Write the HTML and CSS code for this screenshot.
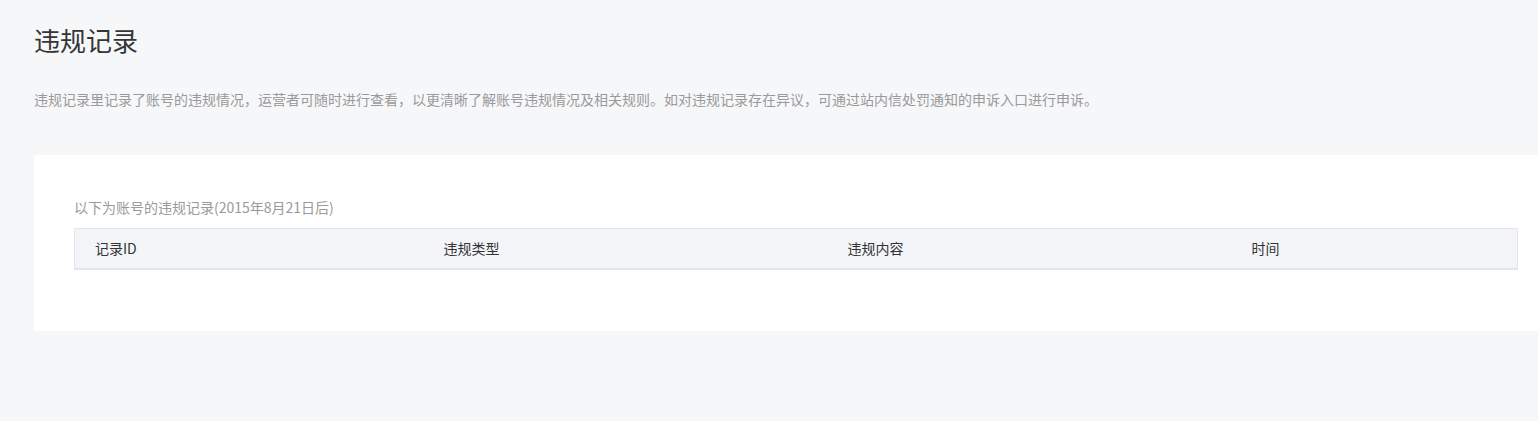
FILE: index.html
```html
<!DOCTYPE html>
<html lang="zh-CN">
<head>
    <meta charset="UTF-8">
    <title>违规记录</title>
    <link rel="stylesheet" href="styles.css">
</head>
<body>
    <div class="page">
        <h1 class="page-title">违规记录</h1>
        <p class="page-desc">违规记录里记录了账号的违规情况，运营者可随时进行查看，以更清晰了解账号违规情况及相关规则。如对违规记录存在异议，可通过站内信处罚通知的申诉入口进行申诉。</p>

        <div class="panel">
            <div class="panel-caption">以下为账号的违规记录(2015年8月21日后)</div>
            <table class="record-table">
                <thead>
                    <tr>
                        <th class="col-id">记录ID</th>
                        <th class="col-type">违规类型</th>
                        <th class="col-content">违规内容</th>
                        <th class="col-time">时间</th>
                    </tr>
                </thead>
                <tbody></tbody>
            </table>
        </div>
    </div>
</body>
</html>
```

FILE: styles.css
```css
:root {
    --bg: #f6f7f9;
    --text: #333;
    --muted: #9a9a9a;
    --th-bg: #f4f5f9;
    --th-border: #e4e5ea;
}

body {
    margin: 0;
    min-height: 100vh;
    background: var(--bg);
    font-family: "Noto Sans CJK SC", "Noto Sans", sans-serif;
    color: var(--text);
}

.page {
    padding: 23px 0 0 34px;
}

.page-title {
    margin: 0;
    font-size: 26px;
    font-weight: normal;
    line-height: 34px;
    color: #353535;
}

.page-desc {
    margin: 32px 0 0;
    font-size: 14px;
    line-height: 20px;
    color: var(--muted);
}

.panel {
    margin-top: 46px;
    background: #fff;
    padding: 42px 20px 61px 40px;
}

.panel-caption {
    font-size: 14px;
    line-height: 20px;
    color: var(--muted);
    margin-bottom: 11px;
}

.record-table {
    width: 100%;
    border-collapse: collapse;
    table-layout: fixed;
}

.record-table th {
    box-sizing: border-box;
    background: var(--th-bg);
    border-top: 1px solid var(--th-border);
    border-bottom: 2px solid var(--th-border);
    height: 40px;
    padding: 0 0 0 20px;
    text-align: left;
    font-weight: normal;
    font-size: 14px;
    color: var(--text);
}

.record-table th:first-child {
    border-left: 1px solid var(--th-border);
}

.record-table th:last-child {
    border-right: 1px solid var(--th-border);
}

.col-id { width: 349px; }
.col-type { width: 404px; }
.col-content { width: 404px; }
```
